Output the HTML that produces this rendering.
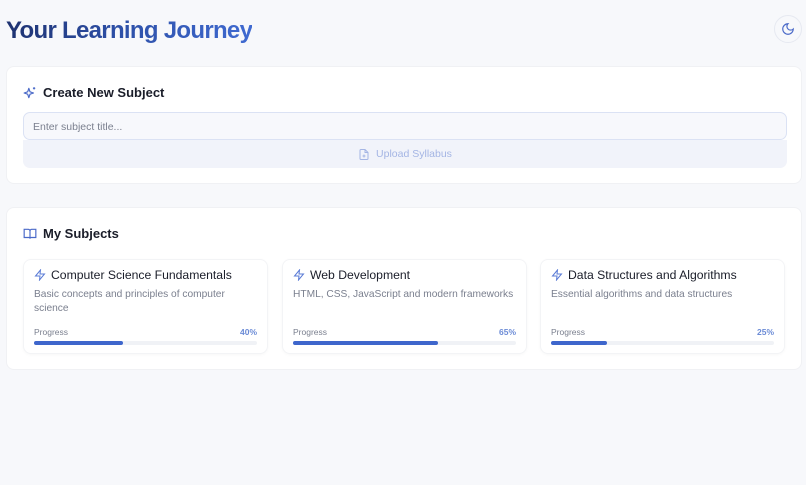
<!DOCTYPE html>
<html><head><style>
*{box-sizing:border-box;margin:0;padding:0}
body{width:806px;height:485px;background:#f7f8fb;font-family:"Liberation Sans",sans-serif;position:relative;overflow:hidden}
h1{position:absolute;left:6px;top:17px;font-size:24px;font-weight:bold;letter-spacing:-0.7px;background:linear-gradient(90deg,#1e3270 0%,#2d4fa6 45%,#3f6ad1 100%);-webkit-background-clip:text;color:transparent}
.moon{position:absolute;left:774px;top:15px;width:28px;height:28px;border-radius:50%;border:1px solid #e6e9f1;background:#f7f8fb;display:flex;align-items:center;justify-content:center}
.card{position:absolute;left:6px;width:796px;background:#fff;border-radius:8px;border:1px solid #f0f1f4}
.ht{position:absolute;left:16px;font-size:13px;font-weight:bold;color:#1a1d29;display:flex;align-items:center;gap:6px}
.inp{position:absolute;left:16px;top:45px;width:764px;height:28px;border:1px solid #dbe2f4;border-radius:7px;background:#f7f8fc;font-size:10.5px;color:#7a7f8e;padding:8px 9px}
.up{position:absolute;left:16px;top:73px;width:764px;height:28px;border-radius:0 0 7px 7px;background:#f1f3fa;font-size:10.5px;color:#a4b5e4;display:flex;align-items:center;justify-content:center;gap:6px}
.sc{position:absolute;top:51px;width:245px;height:95px;border-radius:8px;border:1px solid #f3f4f6;box-shadow:0 1px 3px rgba(0,0,0,.03);background:#fff}
.st{position:absolute;left:10px;top:8px;font-size:12.2px;color:#1a1d29;display:flex;align-items:center;gap:5px}
.sd{position:absolute;left:10px;top:28px;width:205px;font-size:10.2px;line-height:14px;color:#7a7f8e}
.pl{position:absolute;left:10px;top:67px;font-size:8.5px;color:#7a7f8e}
.pp{position:absolute;right:10px;top:67px;font-size:8.5px;color:#6b8bd6;font-weight:bold}
.bar{position:absolute;left:10px;right:10px;top:81px;height:4px;border-radius:2px;background:#f0f2f6}
.bar i{display:block;height:4px;border-radius:2px;background:#3e66cc}
</style></head><body>
<h1>Your Learning Journey</h1>
<div class="moon"><svg width="14" height="14" viewBox="0 0 24 24" fill="none" stroke="#4a69c8" stroke-width="2" stroke-linecap="round"><path d="M12 3a6 6 0 0 0 9 9 9 9 0 1 1-9-9z"/></svg></div>
<div class="card" style="top:66px;height:118px">
<div class="ht" style="top:18px"><svg width="14" height="14" viewBox="0 0 24 24" fill="none" stroke="#4a69c8" stroke-width="2" stroke-linejoin="round"><path d="M10 4l2 6 6 2-6 2-2 6-2-6-6-2 6-2z"/><path d="M19 2v4M17 4h4"/></svg>Create New Subject</div>
<div class="inp">Enter subject title...</div>
<div class="up"><svg width="12" height="13" viewBox="0 0 24 24" fill="none" stroke="#a4b5e4" stroke-width="2"><path d="M14 2H6a2 2 0 0 0-2 2v16a2 2 0 0 0 2 2h12a2 2 0 0 0 2-2V8z"/><path d="M14 2v6h6M12 12v6M9 15h6"/></svg>Upload Syllabus</div>
</div>
<div class="card" style="top:207px;height:163px">
<div class="ht" style="top:18px"><svg width="14" height="14" viewBox="0 0 24 24" fill="none" stroke="#4a69c8" stroke-width="2"><path d="M2 4h7a3 3 0 0 1 3 3v13a2 2 0 0 0-2-2H2zM22 4h-7a3 3 0 0 0-3 3v13a2 2 0 0 1 2-2h8z"/></svg>My Subjects</div>
<div class="sc" style="left:16px"><div class="st"><svg width="12" height="12" viewBox="0 0 24 24" fill="none" stroke="#5a7bd6" stroke-width="2"><path d="M13 2L3 14h9l-1 8 10-12h-9z"/></svg>Computer Science Fundamentals</div><div class="sd">Basic concepts and principles of computer science</div><div class="pl">Progress</div><div class="pp">40%</div><div class="bar"><i style="width:40%"></i></div></div>
<div class="sc" style="left:275px"><div class="st"><svg width="12" height="12" viewBox="0 0 24 24" fill="none" stroke="#5a7bd6" stroke-width="2"><path d="M13 2L3 14h9l-1 8 10-12h-9z"/></svg>Web Development</div><div class="sd" style="width:235px">HTML, CSS, JavaScript and modern frameworks</div><div class="pl">Progress</div><div class="pp">65%</div><div class="bar"><i style="width:65%"></i></div></div>
<div class="sc" style="left:533px"><div class="st"><svg width="12" height="12" viewBox="0 0 24 24" fill="none" stroke="#5a7bd6" stroke-width="2"><path d="M13 2L3 14h9l-1 8 10-12h-9z"/></svg>Data Structures and Algorithms</div><div class="sd" style="width:235px">Essential algorithms and data structures</div><div class="pl">Progress</div><div class="pp">25%</div><div class="bar"><i style="width:25%"></i></div></div>
</div>
</body></html>
